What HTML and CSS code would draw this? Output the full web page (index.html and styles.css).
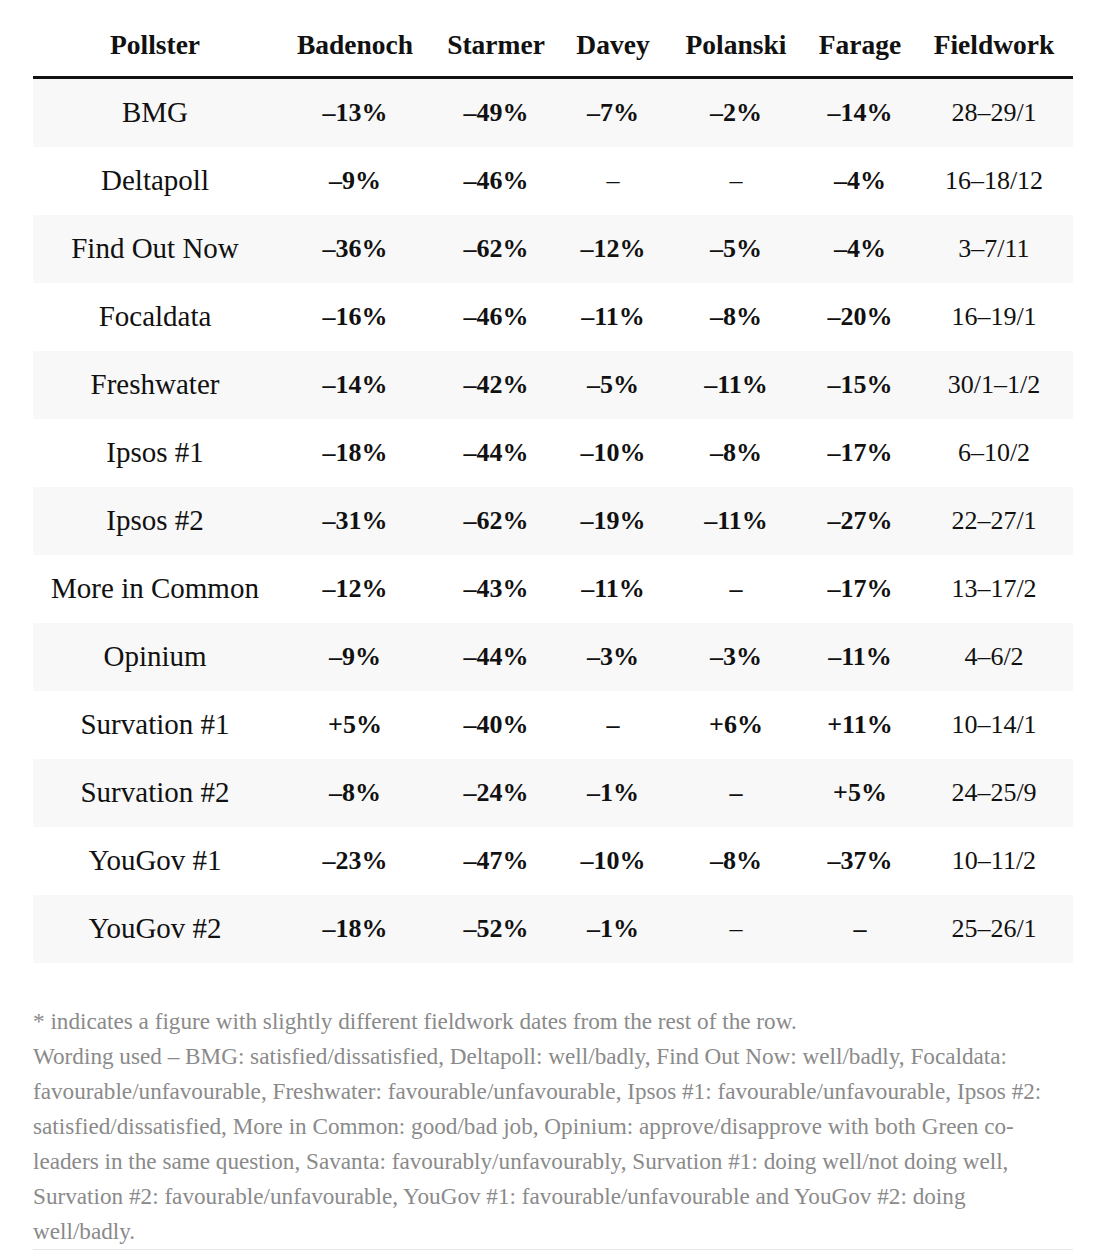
FILE: index.html
```html
<!DOCTYPE html>
<html lang="en">
<head>
    <meta charset="UTF-8">
    <meta name="viewport" content="width=device-width, initial-scale=1.0">
    <title>Leader net ratings</title>
    <link rel="stylesheet" href="styles.css">
</head>
<body>
    <div class="wrap">
        <table class="polls">
            <colgroup>
                <col style="width: 244px">
                <col style="width: 156px">
                <col style="width: 126px">
                <col style="width: 108px">
                <col style="width: 138px">
                <col style="width: 110px">
                <col style="width: 158px">
            </colgroup>
            <thead>
                <tr>
                    <th>Pollster</th>
                    <th>Badenoch</th>
                    <th>Starmer</th>
                    <th>Davey</th>
                    <th>Polanski</th>
                    <th>Farage</th>
                    <th>Fieldwork</th>
                </tr>
            </thead>
            <tbody>
                <tr><td>BMG</td><td class="num">–13%</td><td class="num">–49%</td><td class="num">–7%</td><td class="num">–2%</td><td class="num">–14%</td><td>28–29/1</td></tr>
                <tr><td>Deltapoll</td><td class="num">–9%</td><td class="num">–46%</td><td>–</td><td>–</td><td class="num">–4%</td><td>16–18/12</td></tr>
                <tr><td>Find Out Now</td><td class="num">–36%</td><td class="num">–62%</td><td class="num">–12%</td><td class="num">–5%</td><td class="num">–4%</td><td>3–7/11</td></tr>
                <tr><td>Focaldata</td><td class="num">–16%</td><td class="num">–46%</td><td class="num">–11%</td><td class="num">–8%</td><td class="num">–20%</td><td>16–19/1</td></tr>
                <tr><td>Freshwater</td><td class="num">–14%</td><td class="num">–42%</td><td class="num">–5%</td><td class="num">–11%</td><td class="num">–15%</td><td>30/1–1/2</td></tr>
                <tr><td>Ipsos #1</td><td class="num">–18%</td><td class="num">–44%</td><td class="num">–10%</td><td class="num">–8%</td><td class="num">–17%</td><td>6–10/2</td></tr>
                <tr><td>Ipsos #2</td><td class="num">–31%</td><td class="num">–62%</td><td class="num">–19%</td><td class="num">–11%</td><td class="num">–27%</td><td>22–27/1</td></tr>
                <tr><td>More in Common</td><td class="num">–12%</td><td class="num">–43%</td><td class="num">–11%</td><td class="num">–</td><td class="num">–17%</td><td>13–17/2</td></tr>
                <tr><td>Opinium</td><td class="num">–9%</td><td class="num">–44%</td><td class="num">–3%</td><td class="num">–3%</td><td class="num">–11%</td><td>4–6/2</td></tr>
                <tr><td>Survation #1</td><td class="num">+5%</td><td class="num">–40%</td><td class="num">–</td><td class="num">+6%</td><td class="num">+11%</td><td>10–14/1</td></tr>
                <tr><td>Survation #2</td><td class="num">–8%</td><td class="num">–24%</td><td class="num">–1%</td><td class="num">–</td><td class="num">+5%</td><td>24–25/9</td></tr>
                <tr><td>YouGov #1</td><td class="num">–23%</td><td class="num">–47%</td><td class="num">–10%</td><td class="num">–8%</td><td class="num">–37%</td><td>10–11/2</td></tr>
                <tr><td>YouGov #2</td><td class="num">–18%</td><td class="num">–52%</td><td class="num">–1%</td><td>–</td><td class="num">–</td><td>25–26/1</td></tr>
            </tbody>
        </table>

        <div class="notes">
            <p>* indicates a figure with slightly different fieldwork dates from the rest of the row.</p>
            <p>Wording used – BMG: satisfied/dissatisfied, Deltapoll: well/badly, Find Out Now: well/badly, Focaldata: favourable/unfavourable, Freshwater: favourable/unfavourable, Ipsos #1: favourable/unfavourable, Ipsos #2: satisfied/dissatisfied, More in Common: good/bad job, Opinium: approve/disapprove with both Green co-leaders in the same question, Savanta: favourably/unfavourably, Survation #1: doing well/not doing well, Survation #2: favourable/unfavourable, YouGov #1: favourable/unfavourable and YouGov #2: doing well/badly.</p>
        </div>
    </div>
</body>
</html>
```

FILE: styles.css
```css
body {
    margin: 0;
    padding: 0;
    background: #fff;
    font-family: "Liberation Serif", "Times New Roman", serif;
    color: #111;
}
.wrap {
    width: 1040px;
    margin-left: 33px;
}
.polls {
    width: 1040px;
    border-collapse: collapse;
    table-layout: fixed;
    font-size: 26px;
}
.polls th {
    height: 77px;
    padding: 14px 0 0;
    box-sizing: border-box;
    font-size: 27.5px;
    font-weight: 700;
    text-align: center;
    vertical-align: middle;
    border-bottom: 3px solid #111;
}
.polls td {
    height: 68px;
    padding: 0;
    text-align: center;
    vertical-align: middle;
}
.polls td:first-child {
    font-size: 29px;
}
.polls tbody tr:nth-child(odd) {
    background-color: #f8f8f8;
}
.num {
    font-weight: 700;
}
.notes {
    margin-top: 41px;
    padding-bottom: 0;
    border-bottom: 1px solid #e6e6e6;
    color: #8a8a8a;
    font-size: 23.2px;
    line-height: 35px;
}
.notes p {
    margin: 0;
}
```
